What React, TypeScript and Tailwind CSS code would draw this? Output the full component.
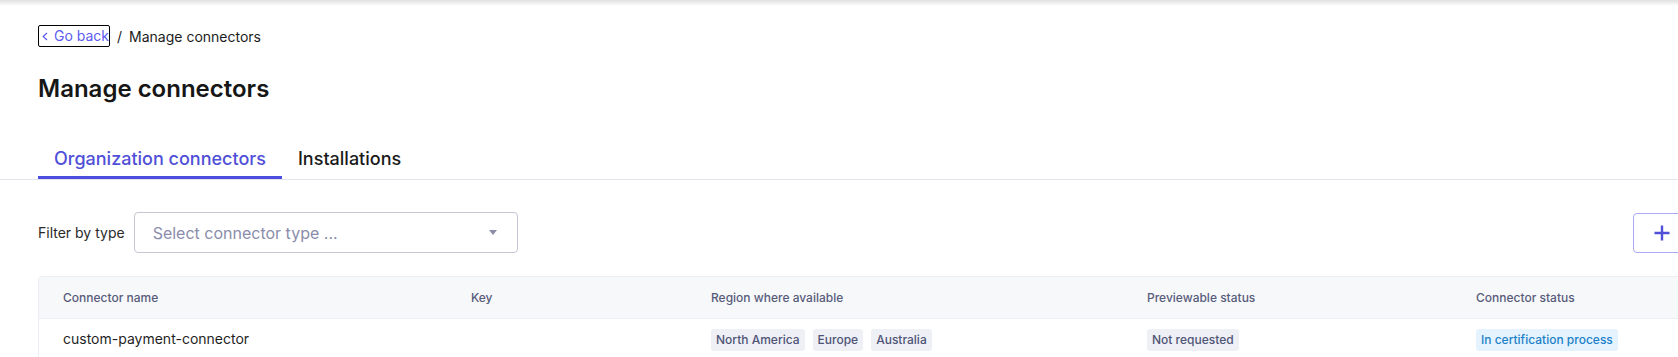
const regions = ['North America', 'Europe', 'Australia'];

const Tag = ({ children, blue = false }: { children: React.ReactNode; blue?: boolean }) => (
  <span
    className={`inline-flex h-[22px] items-center rounded-[3px] px-[5px] text-[12px] font-medium ${
      blue ? 'bg-[#e4f3fd] text-[#1d80c8]' : 'bg-[#eef0f5] text-[#4f5477]'
    }`}
  >
    {children}
  </span>
);

export default function App() {
  return (
    <div className="w-full min-h-screen overflow-hidden bg-white font-['Inter',sans-serif] text-[#1c1c1c]">
      <div className="h-[6px] bg-linear-to-b from-[#e1e1e1] to-white"></div>

      {/* breadcrumb */}
      <div className="mt-[19px] flex items-center pl-[38px] text-[14px]">
        <button className="flex h-[22px] items-center gap-[6px] rounded-[2px] border border-black pl-[3px] text-[#5c5cf0]">
          <svg width="6" height="9" viewBox="0 0 6 9" fill="none">
            <polyline points="5,1 1.2,4.5 5,8" stroke="currentColor" strokeWidth="1.2" />
          </svg>
          <span className="leading-5">Go back</span>
        </button>
        <span className="mx-[7px] text-[#1c1c1c]">/</span>
        <span className="text-[#1c1c1c]">Manage connectors</span>
      </div>

      <h1 className="mt-[26px] pl-[38px] text-[24px] leading-8 font-semibold text-[#161616]">Manage connectors</h1>

      {/* tabs */}
      <div className="mt-[40px] flex border-b border-[#e3e3ea] pl-[38px]">
        <div className="border-b-[3px] border-[#4d4de0] px-4 pb-[3px] text-[18px] leading-7 font-medium text-[#4f4fd8]">
          Organization connectors
        </div>
        <div className="px-4 pb-[6px] text-[18px] leading-7 font-medium text-[#1a1a1a]">Installations</div>
      </div>

      <div className="w-[1760px] px-[38px]">
        {/* filter */}
        <div className="mt-[32px] flex items-center">
          <span className="text-[14px] text-[#2a2a2a]">Filter by type</span>
          <div className="ml-[9px] flex h-[41px] w-[384px] items-center justify-between rounded-[4px] border border-[#c6c7d6] pr-[20px] pl-[18px]">
            <span className="text-[16px] text-[#8b8dab]">Select connector type ...</span>
            <svg width="8" height="5" viewBox="0 0 8 5">
              <polygon points="0,0 8,0 4,5" fill="#8b8dab" />
            </svg>
          </div>
          <button
            aria-label="Add connector"
            className="ml-auto flex h-10 w-[89px] items-center rounded-[4px] border border-[#a9a9f7] pl-[20px] text-[#4f4fd8]"
          >
            <svg width="16" height="16" viewBox="0 0 16 16" fill="none">
              <path d="M8 0.5v15M0.5 8h15" stroke="currentColor" strokeWidth="2.4" />
            </svg>
          </button>
        </div>

        {/* table */}
        <div className="mt-[23px] overflow-hidden rounded-[4px] border border-[#eceef3]">
          <div className="grid h-[42px] grid-cols-[408px_240px_436px_329px_1fr] items-center border-b border-[#eceef3] bg-[#f7f8fa] pl-6 text-[12px] font-medium text-[#575c7b]">
            <span>Connector name</span>
            <span>Key</span>
            <span>Region where available</span>
            <span>Previewable status</span>
            <span>Connector status</span>
          </div>
          <div className="grid grid-cols-[408px_240px_436px_329px_1fr] items-center py-[9px] pl-6 text-[14px] text-[#1f1f1f]">
            <span className="-mt-[2px]">custom-payment-connector</span>
            <span></span>
            <div className="flex gap-2">
              {regions.map((r) => (
                <Tag key={r}>{r}</Tag>
              ))}
            </div>
            <div>
              <Tag>Not requested</Tag>
            </div>
            <div>
              <Tag blue>In certification process</Tag>
            </div>
          </div>
        </div>
      </div>
    </div>
  );
}
